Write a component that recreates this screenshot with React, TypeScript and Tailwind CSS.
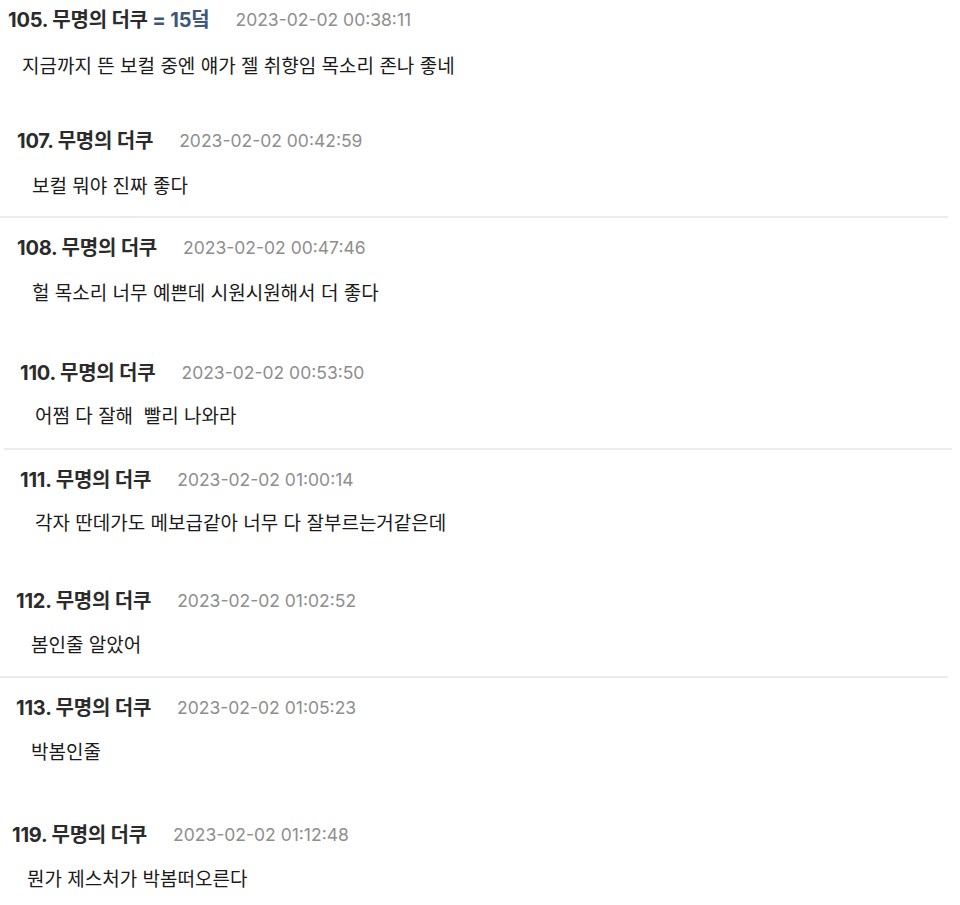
import { Fragment } from "react";

type Comment = {
  no: number;
  date: string;
  body: string;
  badge?: string;
  // spacing tweaks, every screenshot in the collage sits a bit differently
  top: string;
  indent: string;
  bodyIndent: string;
  gap: string;
  divider?: string;
};

const COMMENTS: Comment[] = [
  {
    no: 105,
    badge: "= 15덬",
    date: "2023-02-02 00:38:11",
    body: "지금까지 뜬 보컬 중엔 얘가 젤 취향임 목소리 존나 좋네",
    top: "mt-[8px]",
    indent: "pl-[8px]",
    bodyIndent: "pl-[22px]",
    gap: "mt-[23px]",
  },
  {
    no: 107,
    date: "2023-02-02 00:42:59",
    body: "보컬 뭐야 진짜 좋다",
    top: "mt-[50px]",
    indent: "pl-[17px]",
    bodyIndent: "pl-[32px]",
    gap: "mt-[22px]",
    divider: "mt-[17px] ml-0",
  },
  {
    no: 108,
    date: "2023-02-02 00:47:46",
    body: "헐 목소리 너무 예쁜데 시원시원해서 더 좋다",
    top: "mt-[18px]",
    indent: "pl-[17px]",
    bodyIndent: "pl-[32px]",
    gap: "mt-[22px]",
  },
  {
    no: 110,
    date: "2023-02-02 00:53:50",
    body: "어쩜 다 잘해  빨리 나와라",
    top: "mt-[55px]",
    indent: "pl-[20px]",
    bodyIndent: "pl-[35px]",
    gap: "mt-[20px]",
    divider: "mt-[19px] ml-[4px]",
  },
  {
    no: 111,
    date: "2023-02-02 01:00:14",
    body: "각자 딴데가도 메보급같아 너무 다 잘부르는거같은데",
    top: "mt-[18px]",
    indent: "pl-[20px]",
    bodyIndent: "pl-[35px]",
    gap: "mt-[20px]",
  },
  {
    no: 112,
    date: "2023-02-02 01:02:52",
    body: "봄인줄 알았어",
    top: "mt-[53px]",
    indent: "pl-[16px]",
    bodyIndent: "pl-[31px]",
    gap: "mt-[21px]",
    divider: "mt-[18px] ml-0",
  },
  {
    no: 113,
    date: "2023-02-02 01:05:23",
    body: "박봄인줄",
    top: "mt-[18px]",
    indent: "pl-[16px]",
    bodyIndent: "pl-[31px]",
    gap: "mt-[21px]",
  },
  {
    no: 119,
    date: "2023-02-02 01:12:48",
    body: "뭔가 제스처가 박봄떠오른다",
    top: "mt-[58px]",
    indent: "pl-[12px]",
    bodyIndent: "pl-[27px]",
    gap: "mt-[21px]",
  },
];

function CommentRow({ c }: { c: Comment }) {
  return (
    <div className={c.top}>
      <div className={`flex items-center h-[24px] whitespace-nowrap ${c.indent}`}>
        <span className="text-[20px] font-bold text-[#2b2b2b] tracking-[-0.2px]">
          {c.no}. 무명의 더쿠
          {c.badge && <span className="text-[#3e5878]"> {c.badge}</span>}
        </span>
        <span className="ml-[26px] text-[17.5px] text-[#8e8e8e]">{c.date}</span>
      </div>
      <div className={`h-[24px] leading-[24px] text-[19px] text-[#1a1a1a] whitespace-pre ${c.gap} ${c.bodyIndent}`}>
        {c.body}
      </div>
    </div>
  );
}

export default function App() {
  return (
    <div
      className="w-[960px] h-[905px] bg-white overflow-hidden"
      style={{ fontFamily: '"Inter", "Noto Sans CJK KR", sans-serif' }}
    >
      {COMMENTS.map((c) => (
        <Fragment key={c.no}>
          <CommentRow c={c} />
          {c.divider && (
            <div className={`h-[2px] w-[948px] bg-[#ececec] ${c.divider}`} />
          )}
        </Fragment>
      ))}
    </div>
  );
}
